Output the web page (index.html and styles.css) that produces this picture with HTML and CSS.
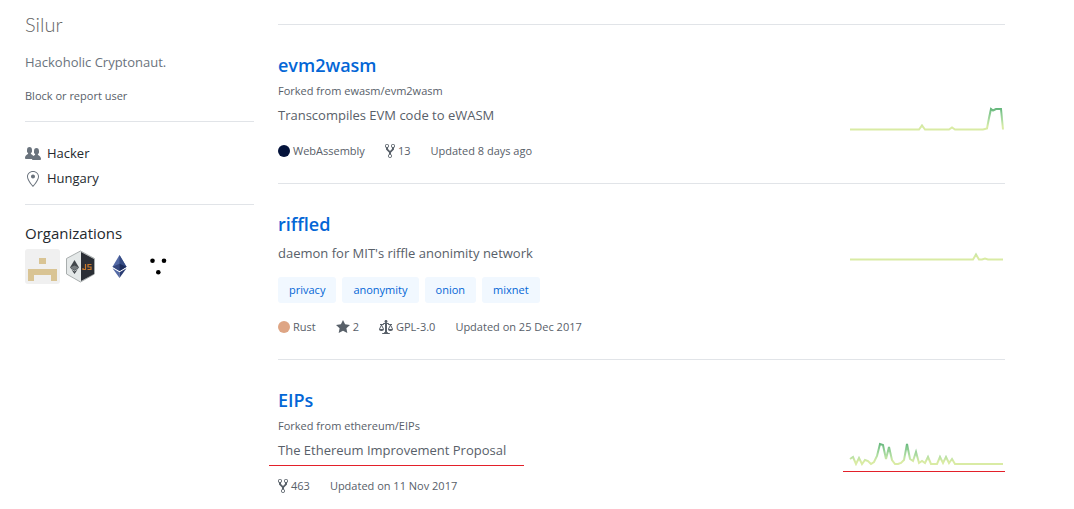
FILE: index.html
```html
<!DOCTYPE html>
<html lang="en">
<head>
<meta charset="utf-8">
<title>Silur</title>
<link rel="stylesheet" href="styles.css">
</head>
<body>
<svg class="defs" aria-hidden="true">
  <defs>
    <linearGradient id="activity" gradientUnits="userSpaceOnUse" x1="0" y1="28" x2="0" y2="4">
      <stop offset="10%" stop-color="#d9eba4"/>
      <stop offset="33%" stop-color="#b4dfa4"/>
      <stop offset="66%" stop-color="#86c98f"/>
      <stop offset="90%" stop-color="#5cb277"/>
    </linearGradient>
    <symbol id="fork" viewBox="0 0 10 16"><path fill-rule="evenodd" d="M8 1a1.993 1.993 0 0 0-1 3.72V6L5 8 3 6V4.72A1.993 1.993 0 0 0 2 1a1.993 1.993 0 0 0-1 3.72V6.5l3 3v1.78A1.993 1.993 0 0 0 5 15a1.993 1.993 0 0 0 1-3.72V9.5l3-3V4.72A1.993 1.993 0 0 0 8 1zM2 4.2C1.34 4.2.8 3.65.8 3c0-.65.55-1.2 1.2-1.2.65 0 1.2.55 1.2 1.2 0 .65-.55 1.2-1.2 1.2zm3 10c-.66 0-1.2-.55-1.2-1.2 0-.65.55-1.2 1.2-1.2.65 0 1.2.55 1.2 1.2 0 .65-.55 1.2-1.2 1.2zm3-10c-.66 0-1.2-.55-1.2-1.2 0-.65.55-1.2 1.2-1.2.65 0 1.2.55 1.2 1.2 0 .65-.55 1.2-1.2 1.2z"/></symbol>
  </defs>
</svg>
<div class="page">
  <aside class="sidebar">
    <h1 class="username">Silur</h1>
    <p class="bio">Hackoholic Cryptonaut.</p>
    <button class="report" type="button">Block or report user</button>
    <ul class="details">
      <li class="detail">
        <svg class="detail-icon" viewBox="0 0 16 16"><path fill-rule="evenodd" d="M16 12.999c0 .439-.45 1-1 1H7.995c-.539 0-.994-.447-.995-.999H1c-.54 0-1-.561-1-1 0-2.634 3-4 3-4s.229-.409 0-1c-.841-.621-1.058-.59-1-3 .058-2.419 1.367-3 2.5-3s2.442.58 2.5 3c.058 2.41-.159 2.379-1 3-.229.59 0 1 0 1s1.549.711 2.42 2.088C9.196 9.369 10 8.999 10 8.999s.229-.409 0-1c-.841-.62-1.058-.59-1-3 .058-2.419 1.367-3 2.5-3s2.437.581 2.495 3c.059 2.41-.158 2.38-1 3-.229.59 0 1 0 1s3.005 1.366 3.005 4z"/></svg>
        <span>Hacker</span>
      </li>
      <li class="detail">
        <svg class="detail-icon" viewBox="-2 0 16 16"><path fill-rule="evenodd" d="M6 0C2.69 0 0 2.5 0 5.5 0 10.02 6 16 6 16s6-5.98 6-10.5C12 2.5 9.31 0 6 0zm0 14.55C4.14 12.52 1 8.44 1 5.5 1 3.02 3.25 1 6 1c1.34 0 2.61.48 3.56 1.36.92.86 1.44 1.97 1.44 3.14 0 2.94-3.14 7.02-5 9.05zM8 5.5c0 1.11-.89 2-2 2-1.11 0-2-.89-2-2 0-1.11.89-2 2-2 1.11 0 2 .89 2 2z"/></svg>
        <span>Hungary</span>
      </li>
    </ul>
    <section class="orgs">
      <h2 class="orgs-title">Organizations</h2>
      <div class="org-list">
        <a class="org" href="#" aria-label="Organization 1"><svg viewBox="0 0 35 35"><rect width="35" height="35" rx="3" fill="#f0f0f0"/><path d="M14 9h7v6h-7zM3 20h29v12h-6v-6H9v6H3z" fill="#d9c494"/></svg></a>
        <a class="org" href="#" aria-label="Organization 2"><svg viewBox="0 0 35 35"><path d="M16.500 2L30.500 9.500V25L16.500 33L2.500 25V9.500z" fill="#e4e8e8" stroke="#a9aeae"/><path d="M17 3L30 10V25L17 32z" fill="#2b2e35"/><path d="M10.500 11L15 18.500L10.500 25L6 18.500z" fill="#41464a"/><path d="M6 18.500L10.500 16.500L15 18.500L10.500 21z" fill="#777d80"/><path d="M6 19.500L10.500 22L15 19.500" fill="none" stroke="#e4e8e8" stroke-width=".7"/><path d="M21.500 15v5.500h-2.500v-1.500M27.500 15.500h-3.500v2.500h3v2.500h-3.500" fill="none" stroke="#c8782c" stroke-width="1.200"/></svg></a>
        <a class="org" href="#" aria-label="Organization 3"><svg viewBox="0 0 35 35"><path d="M16.500 6L23.500 17.800L16.500 22L9.500 17.800z" fill="#5369a5"/><path d="M16.500 6L23.500 17.800L16.500 22z" fill="#344a82"/><path d="M9.500 17.800L16.500 14.700V22z" fill="#35477e"/><path d="M16.500 14.700L23.500 17.800L16.500 22z" fill="#1c2c5b"/><path d="M9.500 19.200L16.500 23.300V29z" fill="#5369a5"/><path d="M23.500 19.200L16.500 23.300V29z" fill="#2a3d73"/></svg></a>
        <a class="org" href="#" aria-label="Organization 4"><svg viewBox="0 0 35 35"><g fill="#000"><circle cx="10.500" cy="11.800" r="2.300"/><circle cx="22" cy="11.800" r="2.300"/><circle cx="16.300" cy="23.300" r="2.300"/></g></svg></a>
      </div>
    </section>
  </aside>
  <main class="repos">
    <article class="repo">
      <div class="repo-body">
        <h3 class="repo-name"><a href="#">evm2wasm</a></h3>
        <p class="forked">Forked from <a href="#">ewasm/evm2wasm</a></p>
        <p class="desc">Transcompiles EVM code to eWASM</p>
        <div class="meta">
          <span class="meta-item"><i class="lang lang-wasm"></i>WebAssembly</span>
          <a class="meta-item" href="#"><svg class="fork-icon"><use href="#fork"/></svg>13</a>
          <span class="meta-item">Updated 8 days ago</span>
        </div>
      </div>
      <div class="graph graph-fork">
        <svg viewBox="0 0 155 30"><path d="M1 28.500H70L73 24.500L76 28.500H100L103 26.500L106 28.500H134L138 27.500L140 17L142 8L144 9.500L147 8L152 8L154 28.500"/></svg>
      </div>
    </article>
    <article class="repo">
      <div class="repo-body">
        <h3 class="repo-name"><a href="#">riffled</a></h3>
        <p class="desc">daemon for MIT's riffle anonimity network</p>
        <div class="topics"><a class="topic" href="#">privacy</a><a class="topic" href="#">anonymity</a><a class="topic" href="#">onion</a><a class="topic" href="#">mixnet</a></div>
        <div class="meta meta-topics">
          <span class="meta-item"><i class="lang lang-rust"></i>Rust</span>
          <a class="meta-item" href="#"><svg class="wide-icon" viewBox="0 0 14 16"><path d="M14 6l-4.900-.64L7 1 4.900 5.360 0 6l3.600 3.260L2.670 14 7 11.670 11.330 14l-.93-4.740z"/></svg>2</a>
          <span class="meta-item"><svg class="wide-icon" viewBox="0 0 14 16"><path fill-rule="evenodd" d="M7 4c-.83 0-1.500-.67-1.500-1.500S6.170 1 7 1s1.500.67 1.500 1.500S7.830 4 7 4zm7 6c0 1.110-.89 2-2 2h-1c-1.110 0-2-.89-2-2l2-4h-1c-.55 0-1-.45-1-1H8v8c.42 0 1 .45 1 1h1c.42 0 1 .45 1 1H3c0-.55.58-1 1-1h1c0-.55.58-1 1-1h.03L6 5H5c0 .55-.45 1-1 1H3l2 4c0 1.110-.89 2-2 2H2c-1.110 0-2-.89-2-2l2-4H1V5h3c0-.55.45-1 1-1h4c.55 0 1 .45 1 1h3v1h-1l2 4zM2.500 7L1 10h3L2.500 7zM13 10l-1.500-3-1.500 3h3z"/></svg>GPL-3.0</span>
          <span class="meta-item">Updated on 25 Dec 2017</span>
        </div>
      </div>
      <div class="graph">
        <svg viewBox="0 0 155 30"><path d="M1 28.500H124L127 23.500L130 28.500H133L136 27.500L139 28.500H154"/></svg>
      </div>
    </article>
    <article class="repo">
      <div class="repo-body">
        <h3 class="repo-name"><a href="#">EIPs</a></h3>
        <p class="forked">Forked from <a href="#">ethereum/EIPs</a></p>
        <p class="desc marked">The Ethereum Improvement Proposal</p>
        <div class="meta">
          <a class="meta-item" href="#"><svg class="fork-icon"><use href="#fork"/></svg>463</a>
          <span class="meta-item">Updated on 11 Nov 2017</span>
        </div>
      </div>
      <div class="graph graph-fork marked">
        <svg viewBox="0 0 155 30"><path d="M1 23L4 21L7 28L10 22L13 28L16 24L19 25L22 28L25 26L28 20L31 8L34 9L37 23L40 11L43 24L46 28L49 28L52 27L55 24L58 8L61 23L64 25L67 16L70 27L73 25L76 27L79 21L82 28L88 28L91 21L94 27L97 21L100 27L103 23L106 28H154"/></svg>
      </div>
    </article>
  </main>
</div>
</body>
</html>
```
FILE: styles.css
```css
* { box-sizing: border-box; }
body {
  margin: 0;
  background: #fff;
  color: #24292e;
  font: 13px/21px "Open Sans", "Noto Sans", sans-serif;
}
h1, h2, h3, p, ul { margin: 0; padding: 0; }
ul { list-style: none; }
a { color: inherit; text-decoration: none; }
svg { display: block; fill: currentColor; }
.defs { position: absolute; width: 0; height: 0; }

.page { display: flex; gap: 24px; padding: 0 69px 0 25px; }

.sidebar { flex: 0 0 229px; padding-top: 12px; }
.username {
  font-family: Lato, "Open Sans", sans-serif;
  font-size: 20px;
  line-height: 24px;
  font-weight: 300;
  color: #666;
}
.bio { margin-top: 16px; color: #6a737d; }
.report {
  display: block;
  margin-top: 14px;
  padding: 0;
  border: 0;
  background: none;
  font: 11px/18px "Open Sans", "Noto Sans", sans-serif;
  color: #586069;
}
.details {
  display: grid;
  gap: 4px;
  margin-top: 16px;
  padding: 21px 0 15px;
  border-top: 1px solid #e1e4e8;
}
.detail { display: flex; align-items: center; gap: 6px; }
.detail-icon { width: 16px; height: 16px; color: #6a737d; }
.orgs { padding-top: 18px; border-top: 1px solid #e1e4e8; }
.orgs-title { font-size: 15px; line-height: 21px; font-weight: 500; }
.org-list { display: flex; gap: 4px; margin-top: 5px; }
.org { width: 35px; height: 35px; }

.repos { flex: 1; min-width: 0; padding-top: 24px; color: #586069; }
.repo {
  display: flex;
  justify-content: space-between;
  padding: 25px 0 23px;
  border-top: 1px solid #e1e4e8;
}
.repo-name { font-size: 18px; line-height: 30px; font-weight: 600; color: #0366d6; }
.forked { font-size: 11px; line-height: 21px; }
.desc { margin-top: 4px; }
.topics { display: flex; gap: 6px; margin-top: 13px; }
.topic {
  padding: 0 11px;
  border-radius: 3px;
  background: #f1f8ff;
  color: #0366d6;
  font-size: 11px;
  line-height: 26px;
}
.meta { display: flex; gap: 20px; margin-top: 16px; font-size: 11px; line-height: 18px; }
.meta-topics { margin-top: 15px; }
.meta-item { display: flex; align-items: center; gap: 3px; }
.lang { width: 12px; height: 12px; border-radius: 50%; }
.lang-wasm { background: #04133b; }
.lang-rust { background: #dea584; }
.fork-icon { width: 10px; height: 16px; }
.wide-icon { width: 14px; height: 16px; }

.graph { flex: 0 0 162px; height: 36px; margin-top: 22px; padding-left: 6px; }
.graph-fork { margin-top: 51px; }
.graph svg { width: 155px; height: 30px; fill: none; stroke: url(#activity); stroke-width: 2; }

.marked { position: relative; }
.marked::after {
  content: "";
  position: absolute;
  height: 1px;
  background: #e3202a;
}
.desc.marked::after { left: -9px; width: 255px; bottom: -5px; }
.graph.marked::after { left: 0; right: 0; bottom: 0; }
```
